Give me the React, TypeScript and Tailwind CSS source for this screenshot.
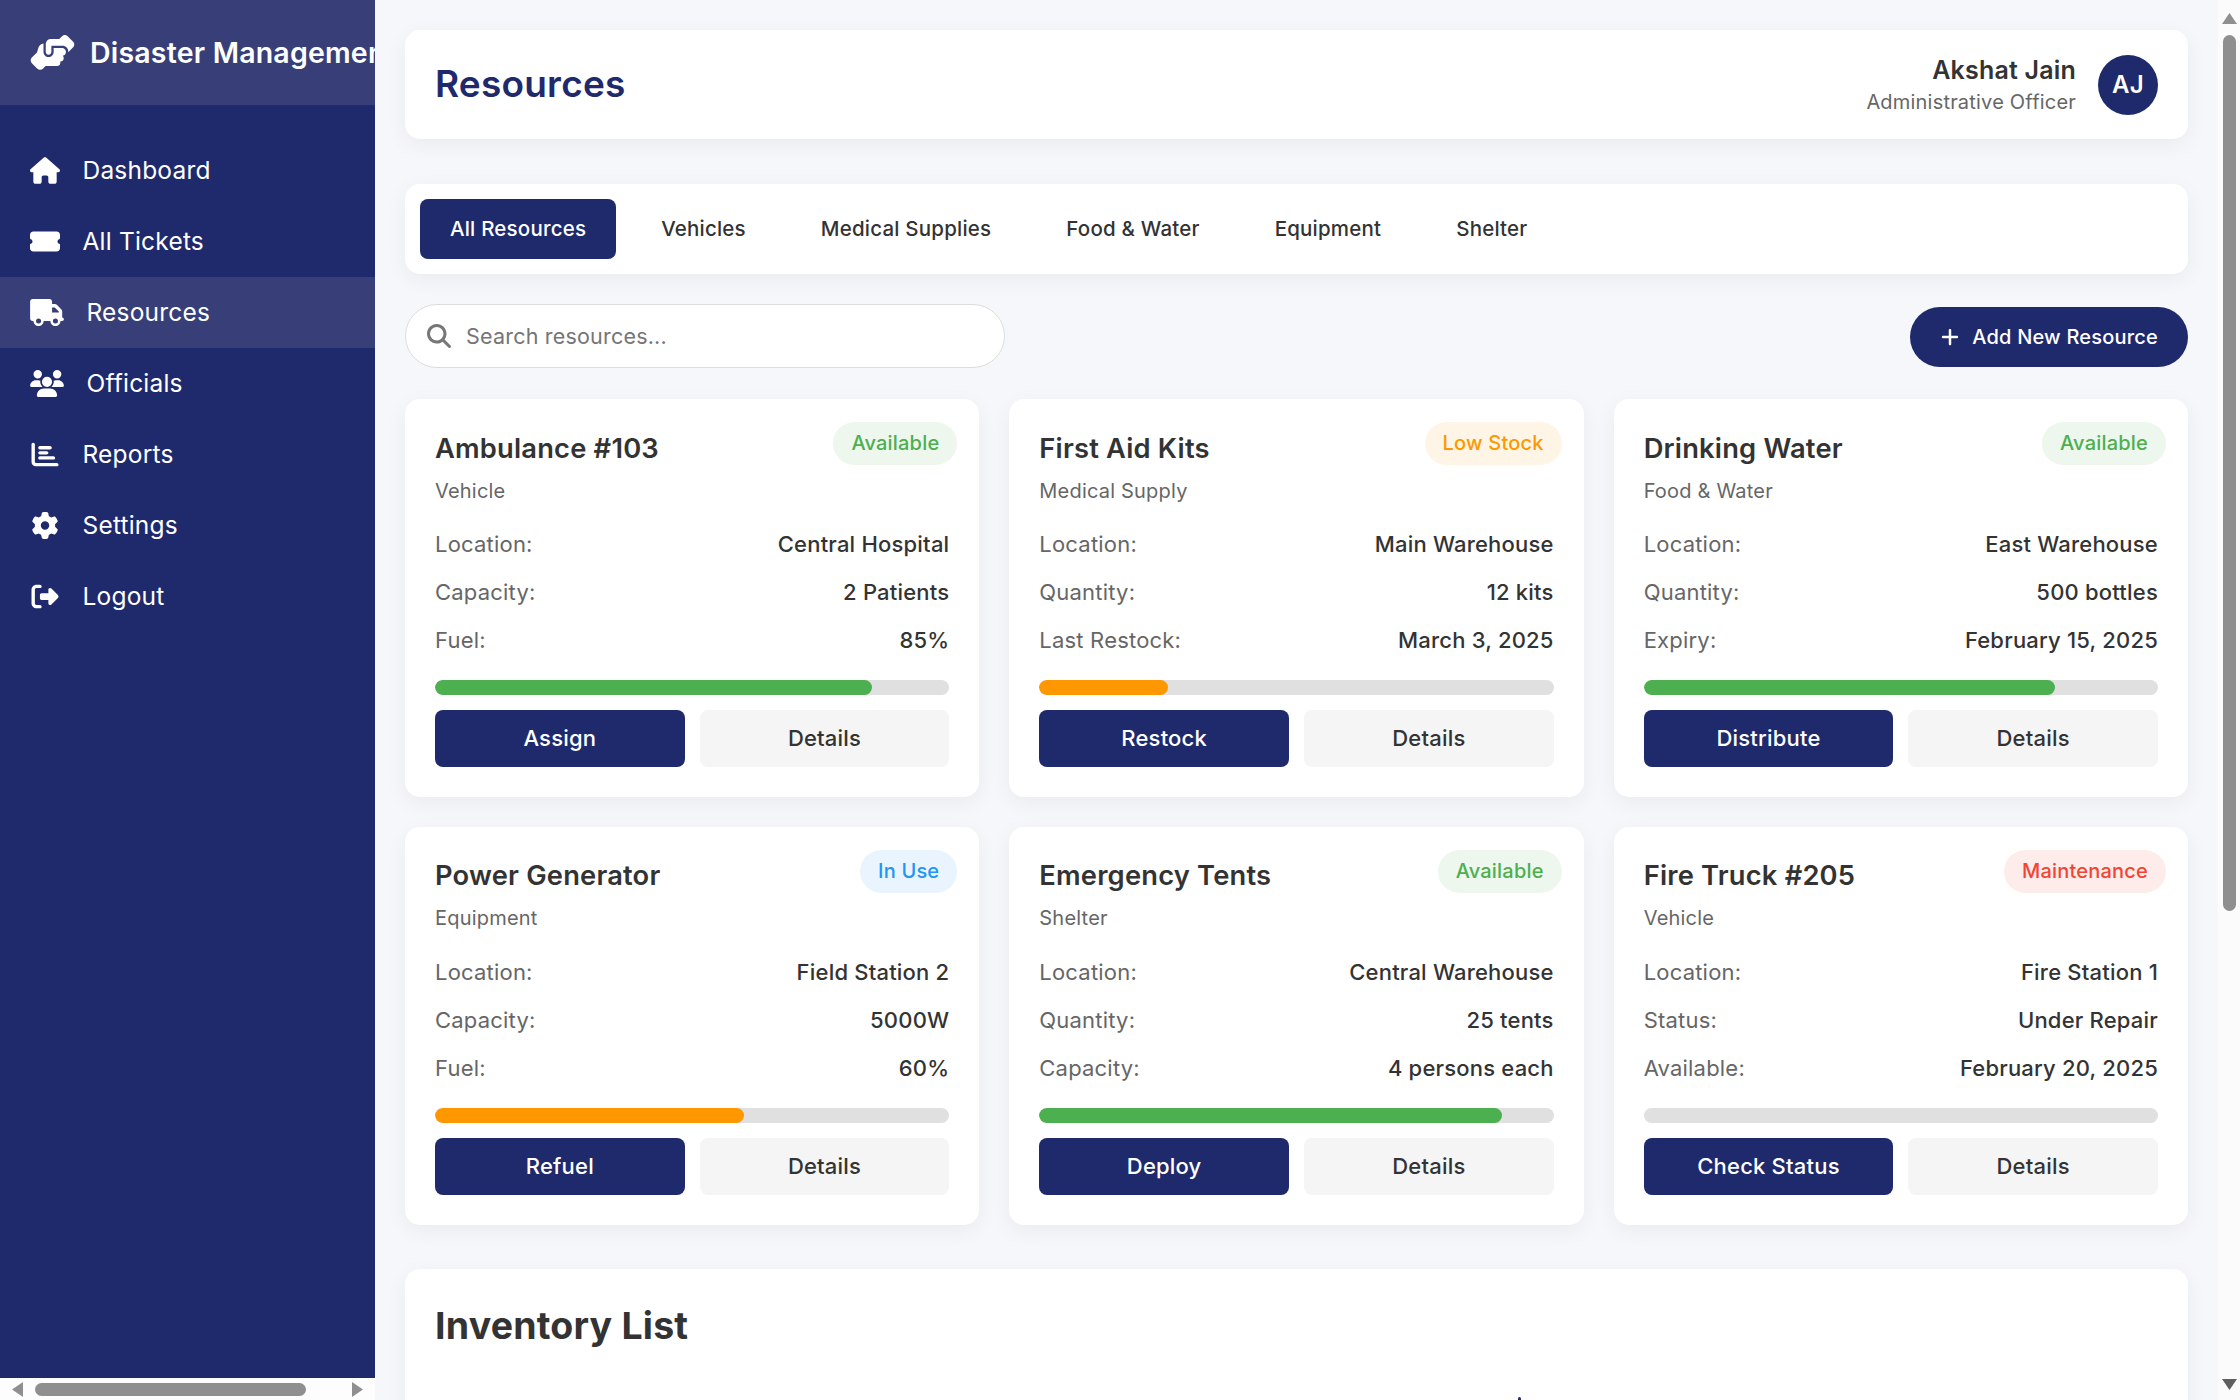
import type { ReactNode } from 'react'
import {
  FaHandshakeAngle,
  FaHouse,
  FaTicketSimple,
  FaTruck,
  FaUsers,
  FaChartBar,
  FaGear,
  FaRightFromBracket,
  FaMagnifyingGlass,
  FaPlus,
} from 'react-icons/fa6'

const navItems = [
  { label: 'Dashboard', icon: <FaHouse className="h-[27px] w-[30px]" /> },
  { label: 'All Tickets', icon: <FaTicketSimple className="h-[27px] w-[30px]" /> },
  { label: 'Resources', icon: <FaTruck className="h-[27px] w-[34px]" />, active: true },
  { label: 'Officials', icon: <FaUsers className="h-[27px] w-[34px]" /> },
  { label: 'Reports', icon: <FaChartBar className="h-[27px] w-[30px]" /> },
  { label: 'Settings', icon: <FaGear className="h-[27px] w-[30px]" /> },
  { label: 'Logout', icon: <FaRightFromBracket className="h-[27px] w-[30px]" /> },
]

const tabs = ['All Resources', 'Vehicles', 'Medical Supplies', 'Food & Water', 'Equipment', 'Shelter']

type Status = 'Available' | 'Low Stock' | 'In Use' | 'Maintenance'

const statusClass: Record<Status, string> = {
  Available: 'bg-[#edf7ee] text-[#4caf50]',
  'Low Stock': 'bg-[#fff5e6] text-[#ff9800]',
  'In Use': 'bg-[#e9f4fe] text-[#2196f3]',
  Maintenance: 'bg-[#feecea] text-[#f44336]',
}

interface Resource {
  name: string
  type: string
  status: Status
  rows: [string, string][]
  level: number
  bar: string
  action: string
}

const resources: Resource[] = [
  {
    name: 'Ambulance #103',
    type: 'Vehicle',
    status: 'Available',
    rows: [['Location:', 'Central Hospital'], ['Capacity:', '2 Patients'], ['Fuel:', '85%']],
    level: 85,
    bar: 'bg-[#4caf50]',
    action: 'Assign',
  },
  {
    name: 'First Aid Kits',
    type: 'Medical Supply',
    status: 'Low Stock',
    rows: [['Location:', 'Main Warehouse'], ['Quantity:', '12 kits'], ['Last Restock:', 'March 3, 2025']],
    level: 25,
    bar: 'bg-[#ff9800]',
    action: 'Restock',
  },
  {
    name: 'Drinking Water',
    type: 'Food & Water',
    status: 'Available',
    rows: [['Location:', 'East Warehouse'], ['Quantity:', '500 bottles'], ['Expiry:', 'February 15, 2025']],
    level: 80,
    bar: 'bg-[#4caf50]',
    action: 'Distribute',
  },
  {
    name: 'Power Generator',
    type: 'Equipment',
    status: 'In Use',
    rows: [['Location:', 'Field Station 2'], ['Capacity:', '5000W'], ['Fuel:', '60%']],
    level: 60,
    bar: 'bg-[#ff9800]',
    action: 'Refuel',
  },
  {
    name: 'Emergency Tents',
    type: 'Shelter',
    status: 'Available',
    rows: [['Location:', 'Central Warehouse'], ['Quantity:', '25 tents'], ['Capacity:', '4 persons each']],
    level: 90,
    bar: 'bg-[#4caf50]',
    action: 'Deploy',
  },
  {
    name: 'Fire Truck #205',
    type: 'Vehicle',
    status: 'Maintenance',
    rows: [['Location:', 'Fire Station 1'], ['Status:', 'Under Repair'], ['Available:', 'February 20, 2025']],
    level: 0,
    bar: 'bg-[#f44336]',
    action: 'Check Status',
  },
]

function Panel({ className, children }: { className?: string; children: ReactNode }) {
  return <div className={`rounded-[15px] bg-white shadow-[0_6px_22px_rgba(0,0,0,0.05)] ${className ?? ''}`}>{children}</div>
}

function ResourceCard({ resource }: { resource: Resource }) {
  return (
    <Panel className="relative h-[398px] px-[30px] pt-[30.5px]">
      <span className={`absolute right-[22px] top-[23px] rounded-full px-[18px] py-[7px] text-[20px] font-medium leading-[29px] ${statusClass[resource.status]}`}>
        {resource.status}
      </span>
      <h3 className="text-[27.3px] font-semibold leading-[38px] text-[#333]">{resource.name}</h3>
      <p className="mt-[8px] text-[20px] leading-[30px] text-[#666]">{resource.type}</p>
      <div className="mt-[21.5px] flex flex-col gap-[14px]">
        {resource.rows.map(([label, value]) => (
          <div key={label} className="flex justify-between text-[22px] leading-[34px]">
            <span className="text-[#666]">{label}</span>
            <span className="font-medium text-[#333]">{value}</span>
          </div>
        ))}
      </div>
      <div className="mt-[23px] h-[15px] overflow-hidden rounded-full bg-[#e0e0e0]">
        <div className={`h-full rounded-full ${resource.bar}`} style={{ width: `${resource.level}%` }} />
      </div>
      <div className="mt-[15px] grid grid-cols-2 gap-[15px]">
        <button className="h-[57px] rounded-[8px] bg-[#1f2a6c] text-[22px] font-medium text-white">{resource.action}</button>
        <button className="h-[57px] rounded-[8px] bg-[#f5f5f5] text-[22px] font-medium text-[#333]">Details</button>
      </div>
    </Panel>
  )
}

export default function App() {
  return (
    <div className="flex h-screen w-full overflow-hidden bg-[#f5f7fb] font-['Inter','Noto_Sans',sans-serif] tracking-[0.2px]">
      {/* sidebar with its own horizontal scrollbar */}
      <aside className="flex w-[375px] shrink-0 flex-col bg-white">
        <div className="flex min-h-0 flex-1 flex-col bg-[#1f2a6c] text-white">
          <div className="flex h-[105px] items-center overflow-hidden whitespace-nowrap bg-[#383f78] pl-[30px]">
            <FaHandshakeAngle className="shrink-0 text-[45px]" />
            <span className="ml-[15px] pt-[1px] text-[28.5px] font-semibold">Disaster Management</span>
          </div>
          <nav className="mt-[30px] flex flex-col">
            {navItems.map((item) => (
              <a key={item.label} className={`flex h-[71px] items-center pl-[30px] text-[24.5px] ${item.active ? 'bg-[#383f78]' : ''}`}>
                <span className="mr-[22.5px] shrink-0">{item.icon}</span>
                {item.label}
              </a>
            ))}
          </nav>
        </div>
        <div className="flex h-[22px] shrink-0 items-center bg-[#fdfdfd]">
          <svg width="11" height="15" viewBox="0 0 11 15" className="ml-[12px] shrink-0"><path d="M11 0v15L0 7.5z" fill="#8f8f8f" /></svg>
          <div className="ml-[12px] h-[13px] w-[271px] rounded-full bg-[#8f8f8f]" />
          <svg width="11" height="15" viewBox="0 0 11 15" className="ml-[46px] shrink-0"><path d="M0 0v15l11-7.5z" fill="#8f8f8f" /></svg>
        </div>
      </aside>

      <main className="min-w-0 flex-1 overflow-hidden px-[30px] pt-[30px]">
        <Panel className="flex h-[109px] items-center justify-between px-[30px]">
          <h1 className="pb-[2px] text-[37px] font-semibold text-[#1f2a6c]">Resources</h1>
          <div className="flex items-center">
            <div className="text-right">
              <div className="text-[25px] font-semibold leading-[34px] text-[#333]">Akshat Jain</div>
              <div className="text-[20px] leading-[30px] text-[#666]">Administrative Officer</div>
            </div>
            <div className="ml-[22px] flex h-[60px] w-[60px] items-center justify-center rounded-full bg-[#1f2a6c] text-[24px] font-semibold text-white">AJ</div>
          </div>
        </Panel>

        <Panel className="mt-[45px] flex h-[90px] items-center gap-[15px] px-[15px]">
          {tabs.map((tab, i) => (
            <button key={tab} className={`h-[60px] rounded-[8px] px-[30px] text-[20.5px] font-medium ${i === 0 ? 'bg-[#1f2a6c] text-white' : 'text-[#333]'}`}>
              {tab}
            </button>
          ))}
        </Panel>

        <div className="mt-[30px] flex items-center justify-between">
          <div className="flex h-[64px] w-[600px] items-center rounded-full border-[1.5px] border-[#dddddd] bg-white pl-[21px]">
            <FaMagnifyingGlass className="text-[24px] text-[#777]" />
            <span className="ml-[15px] text-[21.5px] text-[#757575]">Search resources...</span>
          </div>
          <button className="mt-[2px] flex h-[60px] items-center rounded-full bg-[#1f2a6c] px-[30px] text-[20px] font-medium text-white">
            <FaPlus className="mr-[12px] text-[20px]" />
            Add New Resource
          </button>
        </div>

        <div className="mt-[31px] grid grid-cols-3 gap-x-[30px] gap-y-[29.5px]">
          {resources.map((resource) => (
            <ResourceCard key={resource.name} resource={resource} />
          ))}
        </div>

        <Panel className="relative mt-[44.5px] h-[400px] p-[30px]">
          <h2 className="text-[37.5px] font-bold leading-[54px] text-[#333]">Inventory List</h2>
          {/* tip of the next block, just showing above the fold */}
          <span className="absolute left-[1113px] top-[128px] h-[3px] w-[3px] rounded-t-full bg-[#1f2a6c]" />
        </Panel>
      </main>

      {/* page scrollbar */}
      <div className="flex w-[22px] shrink-0 flex-col items-center bg-[#fbfbfb]">
        <svg width="15" height="11" viewBox="0 0 15 11" className="mt-[13px] shrink-0"><path d="M0 11h15L7.5 0z" fill="#8f8f8f" /></svg>
        <div className="mt-[11px] h-[876px] w-[13px] shrink-0 rounded-full bg-[#8f8f8f]" />
        <svg width="15" height="11" viewBox="0 0 15 11" className="mt-auto mb-[10px] shrink-0"><path d="M0 0h15L7.5 11z" fill="#5f5f5f" /></svg>
      </div>
    </div>
  )
}
